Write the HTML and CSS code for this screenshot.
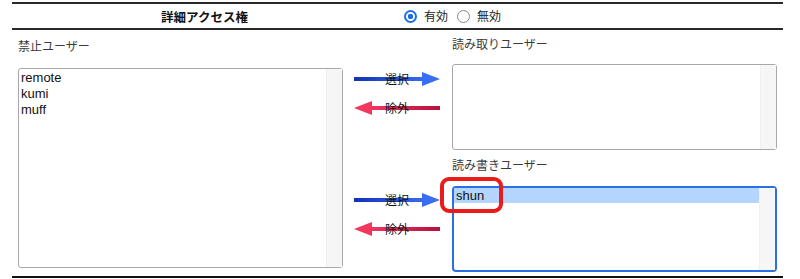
FILE: index.html
```html
<!DOCTYPE html>
<html lang="ja">
  <head>
    <meta charset="utf-8">
    <title>詳細アクセス権</title>
    <link rel="stylesheet" href="styles.css">
  </head>
  <body>
    <svg class="defs" width="0" height="0">
      <defs>
        <linearGradient id="blueLine" x1="0" x2="1" y1="0" y2="0">
          <stop offset="0" stop-color="#1234b4"/>
          <stop offset="1" stop-color="#3a6cf0"/>
        </linearGradient>
        <linearGradient id="pinkLine" x1="0" x2="1" y1="0" y2="0">
          <stop offset="0" stop-color="#f2375f"/>
          <stop offset="1" stop-color="#b8103f"/>
        </linearGradient>
      </defs>
    </svg>
    <div class="acl">
      <div class="acl-head">
        <div class="acl-title">詳細アクセス権</div>
        <div class="acl-mode">
          <span class="radio on"></span><span class="radio-label">有効</span>
          <span class="radio"></span><span class="radio-label">無効</span>
        </div>
      </div>
      <div class="acl-body">
        <div class="deny">
          <div class="caption">禁止ユーザー</div>
          <div class="listbox tall">
            <div class="opts">
              <div class="opt">remote</div>
              <div class="opt">kumi</div>
              <div class="opt">muff</div>
            </div>
            <div class="track"></div>
          </div>
        </div>
        <div class="grant">
          <div class="caption">読み取りユーザー</div>
          <div class="grant-row">
            <div class="movers">
              <div class="mover">
                <svg width="86" height="14"><rect x="0" y="5" width="72" height="4" fill="url(#blueLine)"/><polygon points="68,0 86,7 68,14" fill="#386ef2"/></svg>
                <span>選択</span>
              </div>
              <div class="mover">
                <svg width="86" height="14"><polygon points="0,7 18,0 18,14" fill="#f2375f"/><rect x="14" y="5" width="72" height="4" fill="url(#pinkLine)"/></svg>
                <span>除外</span>
              </div>
            </div>
            <div class="listbox">
              <div class="opts"></div>
              <div class="track"></div>
            </div>
          </div>
          <div class="caption second">読み書きユーザー</div>
          <div class="grant-row">
            <div class="movers lower">
              <div class="mover">
                <svg width="86" height="14"><rect x="0" y="5" width="72" height="4" fill="url(#blueLine)"/><polygon points="68,0 86,7 68,14" fill="#386ef2"/></svg>
                <span>選択</span>
              </div>
              <div class="mover">
                <svg width="86" height="14"><polygon points="0,7 18,0 18,14" fill="#f2375f"/><rect x="14" y="5" width="72" height="4" fill="url(#pinkLine)"/></svg>
                <span>除外</span>
              </div>
            </div>
            <div class="listbox focused">
              <div class="opts">
                <div class="opt selected">shun</div>
              </div>
              <div class="track"></div>
              <div class="callout"></div>
            </div>
          </div>
        </div>
      </div>
    </div>
  </body>
</html>
```

FILE: styles.css
```css
html, body {
  margin: 0;
  background: #fff;
}
body {
  font-family: "Liberation Sans", "Noto Sans CJK JP", sans-serif;
  font-size: 12px;
  color: #333;
}
.defs {
  position: absolute;
}
.acl {
  width: 771px;
  margin: 2px 0 0 12px;
}
.acl-head {
  display: flex;
  align-items: center;
  height: 24px;
  border-top: 2px solid #2a2a2a;
  border-bottom: 2px solid #2a2a2a;
}
.acl-title {
  width: 385px;
  text-align: center;
  font-family: "Noto Sans CJK JP", sans-serif;
  font-size: 12.5px;
  font-weight: bold;
  color: #111;
}
.acl-mode {
  display: flex;
  align-items: center;
  padding-left: 7px;
  font-family: "Noto Sans CJK JP", sans-serif;
  color: #222;
}
.radio {
  box-sizing: border-box;
  width: 13px;
  height: 13px;
  border-radius: 50%;
  border: 1px solid #8a8a8a;
  background: #fff;
}
.radio.on {
  border: 2px solid #1a6fe6;
  background: radial-gradient(circle, #1a6fe6 0 2.5px, #fff 3px);
}
.radio-label {
  margin: 0 9px 0 7px;
  line-height: 16px;
}
.acl-body {
  display: flex;
  border-bottom: 2px solid #111;
}
.caption {
  font-family: "Noto Sans CJK JP", sans-serif;
  line-height: 16px;
  color: #3a3a3a;
}
.deny {
  width: 334px;
  padding: 8px 0 8px 6px;
}
.deny .caption {
  margin-bottom: 14px;
}
.grant {
  width: 431px;
  padding: 6px 0 4px 0;
}
.grant .caption {
  margin-left: 100px;
}
.grant .caption.second {
  margin-top: 7px;
}
.grant-row {
  display: flex;
  margin-top: 12px;
}
.grant .caption.second + .grant-row {
  margin-top: 13px;
}
.movers {
  width: 98px;
  padding: 8px 0 0 2px;
}
.movers.lower {
  padding-top: 7px;
}
.mover {
  position: relative;
  width: 86px;
  height: 14px;
  margin-bottom: 15px;
}
.mover svg {
  display: block;
}
.mover span {
  position: absolute;
  left: 0;
  right: 0;
  top: 0;
  text-align: center;
  line-height: 14px;
  font-family: "Noto Sans CJK JP", sans-serif;
  color: #111;
}
.listbox {
  position: relative;
  box-sizing: border-box;
  display: flex;
  width: 325px;
  height: 86px;
  border: 1px solid #a8a8a8;
  border-radius: 3px;
  background: #fff;
}
.listbox.tall {
  height: 200px;
}
.listbox.focused {
  border: 2px solid #2a70e4;
  border-radius: 4px;
}
.opts {
  flex: 1;
  padding-top: 1px;
  font-size: 13px;
  color: #111;
}
.focused .opts {
  padding-top: 0;
}
.opt {
  line-height: 16px;
  padding-left: 2px;
}
.opt.selected {
  line-height: 15px;
  background: #b4d5fd;
}
.track {
  width: 15px;
  background: #f6f6f6;
  border-left: 1px solid #f0f0f0;
}
.callout {
  position: absolute;
  left: -14px;
  top: -11px;
  box-sizing: border-box;
  width: 63px;
  height: 36px;
  border: 4px solid #ec1b1b;
  border-radius: 9px;
}
```
